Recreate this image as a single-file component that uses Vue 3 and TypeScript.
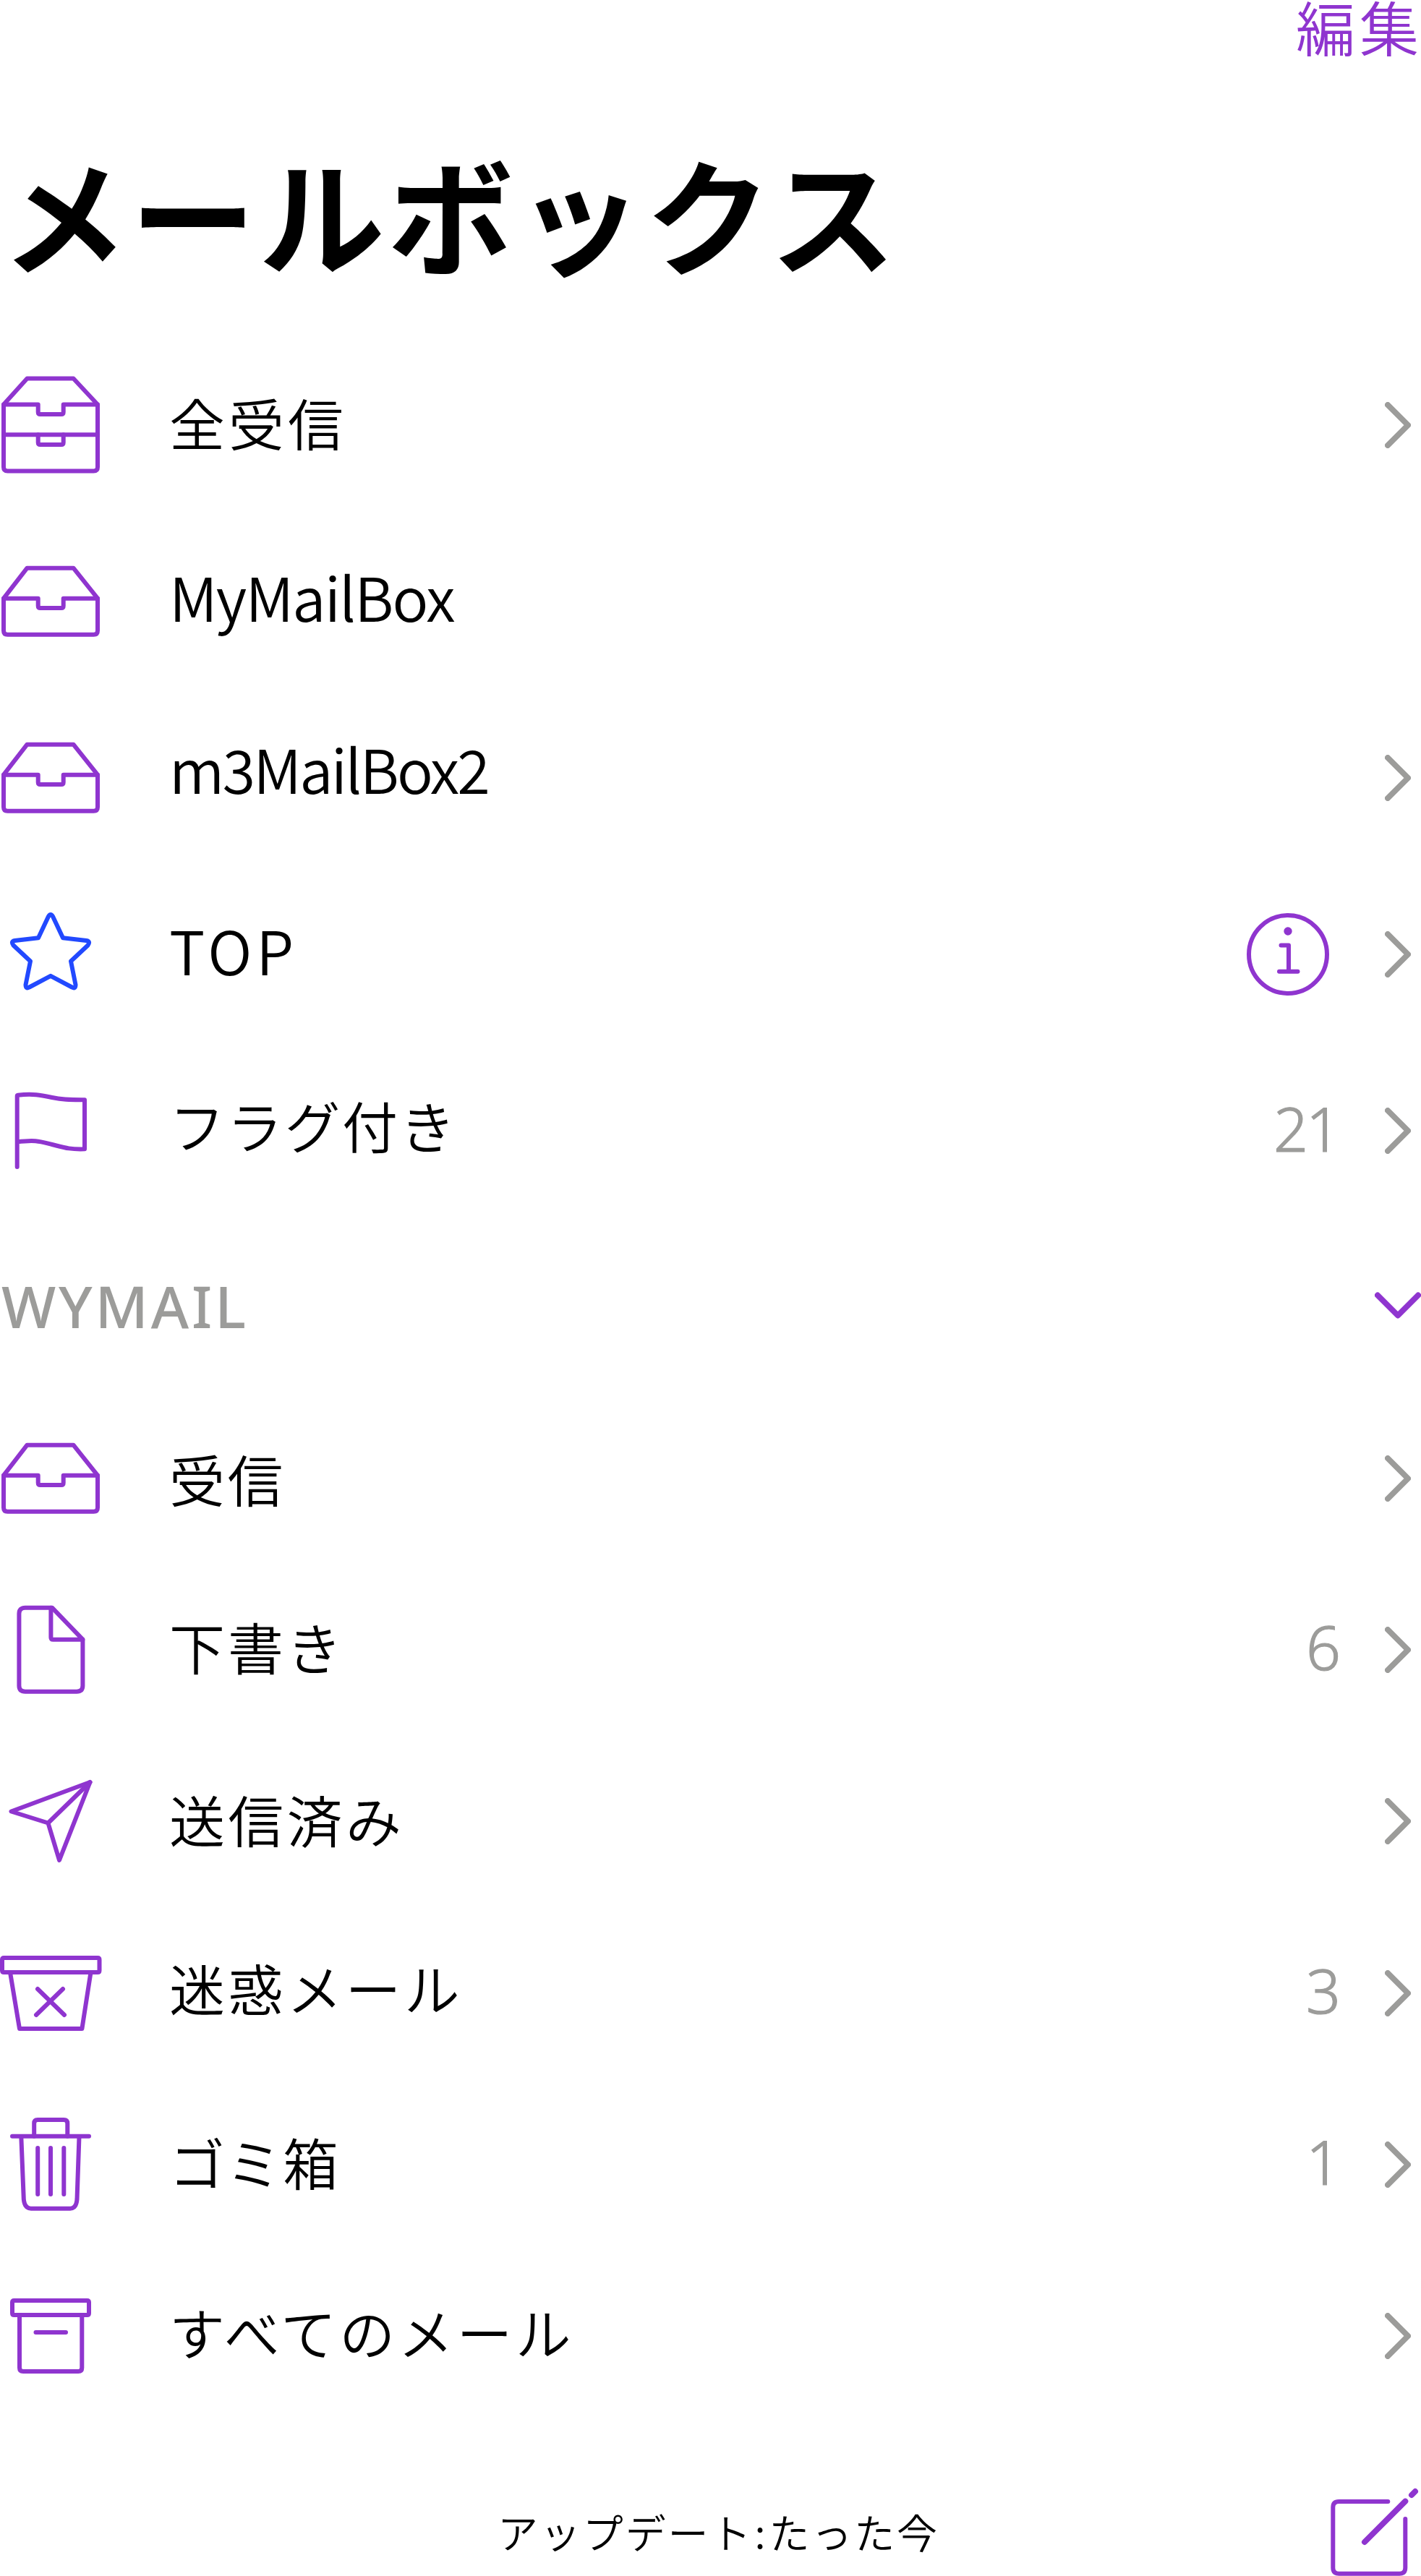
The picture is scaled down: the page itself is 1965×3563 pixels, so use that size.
<script setup lang="ts">
type IconName =
  | 'all' | 'tray' | 'star' | 'flag' | 'doc' | 'send' | 'junk' | 'trash' | 'archive'

interface Mailbox {
  label: string
  icon: IconName
  spacing: number
  shift: number
  latin?: boolean
  count?: number
  info?: boolean
  chevron?: boolean
}

const icons: Record<IconName, string[]> = {
  all: [
    'M37.5 5.5H101.5L135 41.5V128Q135 133.5 129.5 133.5H10.5Q5 133.5 5 128V41.5Z',
    'M5 41.5H52.7V52Q52.7 55 55.7 55H84.7Q87.7 55 87.7 52V41.5H135',
    'M5 83.3H135',
    'M52.7 83.3V94Q52.7 97 55.7 97H84.7Q87.7 97 87.7 94V83.3',
  ],
  tray: [
    'M37.5 23.7H101.5L135 65.7V110.2Q135 115.7 129.5 115.7H10.5Q5 115.7 5 110.2V65.7Z',
    'M5 65.7H52.7V76Q52.7 79 55.7 79H84.7Q87.7 79 87.7 76V65.7H135',
  ],
  star: [
    'M67 17.5Q70 12.5 73 17.5L87 47.2L119.5 51Q125.5 52 121.5 57.5L98 79.5L104.5 112Q104.5 118.5 99.5 115.5L70 99.8L40.5 115.5Q35.5 118.5 35.5 112L42 79.5L18.5 57.5Q14.5 52 20.5 51L53 47.2Z',
  ],
  flag: [
    'M23.7 120V22Q23.7 21 25 20.8C45 18 58 21 72 24S95 27.5 117 27.3V95.3C95 96 88 93 72 89S50 82 23.7 85.5',
  ],
  doc: [
    'M72 11.7H35Q26.4 11.7 26.4 20V119.5Q26.4 127.7 35 127.7H106Q114.4 127.7 114.4 119.5V55.7Z',
    'M70.4 11.7V52.7Q70.4 55.7 73.4 55.7H114.4',
  ],
  send: ['M124.5 16L15.5 56.5L66.5 72.5L82 124Z', 'M124.5 16L66.5 72.5'],
  junk: [
    'M5.5 21H135Q137.5 21 137.5 23.5V38.5Q137.5 41 135 41H5.5Q3 41 3 38.5V23.5Q3 21 5.5 21Z',
    'M14 41L27 119H113.4L125.5 41',
    'M52 64L89 100',
    'M87 64L50 100',
  ],
  trash: [
    'M17 30.7H123',
    'M47.2 30.7V13Q47.2 8 52 8H88.3Q93.3 8 93.3 13V30.7',
    'M29.3 31L32.8 118Q34 130.7 43 130.7H97Q105.5 130.7 106.5 118L109.5 31',
    'M52.2 47V111',
    'M70 47V111',
    'M88.3 47V111',
  ],
  archive: [
    'M19.5 21H120.5Q123 21 123 23.5V38.5Q123 41 120.5 41H19.5Q17 41 17 38.5V23.5Q17 21 19.5 21Z',
    'M27 41V114Q27 119 32 119H108.3Q113.3 119 113.3 114V41',
    'M49.5 65H91',
  ],
}

const mailboxes: Mailbox[] = [
  { label: '全受信', icon: 'all', spacing: 5, shift: -4.1, chevron: true },
  { label: 'MyMailBox', icon: 'tray', spacing: -1.9, shift: -8.2, latin: true },
  { label: 'm3MailBox2', icon: 'tray', spacing: -2.8, shift: -13.7, latin: true, chevron: true },
  { label: 'TOP', icon: 'star', spacing: 6, shift: -7.4, latin: true, info: true, chevron: true },
  { label: 'フラグ付き', icon: 'flag', spacing: 2.7, shift: -8.1, count: 21, chevron: true },
]

const accountBoxes: Mailbox[] = [
  { label: '受信', icon: 'tray', spacing: 3.5, shift: 0.4, chevron: true },
  { label: '下書き', icon: 'doc', spacing: 4, shift: -4.6, count: 6, chevron: true },
  { label: '送信済み', icon: 'send', spacing: 4.3, shift: -3.6, chevron: true },
  { label: '迷惑メール', icon: 'junk', spacing: 4.2, shift: -7.6, count: 3, chevron: true },
  { label: 'ゴミ箱', icon: 'trash', spacing: 1.5, shift: -4.1, count: 1, chevron: true },
  { label: 'すべてのメール', icon: 'archive', spacing: 4.2, shift: -6.1, chevron: true },
]

const groups = [
  { id: 'main', title: '', rows: mailboxes },
  { id: 'account', title: 'WYMAIL', rows: accountBoxes },
]
</script>

<template>
  <main class="screen">
    <header class="bar"><span class="edit">編集</span></header>
    <h1 class="title">メールボックス</h1>

    <section v-for="g in groups" :key="g.id" :class="['group', g.id]">
      <div v-if="g.title" class="section-head">
        <h2 class="section-title">{{ g.title }}</h2>
        <svg class="fold" width="64" height="38" viewBox="0 0 64 38">
          <path d="M4 4.5L32 32.5L60 4.5" />
        </svg>
      </div>
      <div v-for="row in g.rows" :key="row.label" class="row">
        <svg :class="['icon', row.icon]" width="142" height="140" viewBox="0 0 142 140">
          <path v-for="d in icons[row.icon]" :key="d" :d="d" />
        </svg>
        <span
          :class="['label', { latin: row.latin }]"
          :style="{ letterSpacing: row.spacing + 'px', marginTop: row.shift * 2 + 'px' }"
        >{{ row.label }}</span>
        <svg v-if="row.info" class="info" width="120" height="120" viewBox="0 0 120 120">
          <circle cx="60" cy="60" r="54" />
          <circle class="dot" cx="60" cy="28" r="5.7" />
          <path d="M50.5 47.6H61V83.7M48 83.7H73.5" />
        </svg>
        <span v-if="row.count" class="count">{{ row.count }}</span>
        <svg v-if="row.chevron" class="chevron" width="36" height="64" viewBox="0 0 36 64">
          <path d="M4 4L32 32L4 60" />
        </svg>
      </div>
    </section>

    <footer class="footer">
      <span class="status">アップデート<span class="colon">:</span>たった今</span>
      <svg class="compose" width="130" height="125" viewBox="0 0 130 125">
        <path d="M84.3 22H16.5Q8.3 22 8.3 30V113.7Q8.3 121.7 16.5 121.7H100.3Q108.3 121.7 108.3 113.7V46" />
        <path class="pen" d="M52 78L108.3 21.7M117 13L122 8" />
      </svg>
    </footer>
  </main>
</template>

<style>
body {
  margin: 0;
  background: #fff;
}
</style>

<style scoped>
.screen {
  width: 1965px;
  height: 3563px;
  overflow: hidden;
  display: flex;
  flex-direction: column;
  background: #fff;
  color: #000;
  font-family: "Noto Sans CJK JP", sans-serif;
  font-weight: 350;
}
svg {
  display: block;
  flex: none;
  fill: none;
  stroke: #8f35cf;
  stroke-width: 6;
  stroke-linecap: round;
  stroke-linejoin: round;
}
.bar {
  height: 71px;
  display: flex;
  justify-content: flex-end;
}
.edit {
  margin-right: -3px;
  color: #8f35cf;
  font-size: 82px;
  line-height: 71px;
  letter-spacing: 6px;
  white-space: nowrap;
}
.title {
  box-sizing: border-box;
  height: 395px;
  margin: 0;
  padding: 45px 0 0 2px;
  font-size: 174px;
  line-height: 352px;
  letter-spacing: 4px;
  font-weight: 700;
  white-space: nowrap;
}
.row {
  display: flex;
  align-items: center;
  height: 244px;
}
.account .row {
  height: 237.3px;
}
.icon.star {
  stroke: #2249ff;
}
.label {
  flex: 1;
  margin-left: 92px;
  font-size: 77px;
  line-height: 120px;
  white-space: nowrap;
}
.label.latin {
  font-size: 83px;
}
.info {
  margin-right: 74px;
}
.info .dot {
  fill: #8f35cf;
  stroke: none;
}
.count {
  margin: -7px 64px 0 0;
  font-family: "Noto Sans", sans-serif;
  font-weight: 300;
  font-size: 84px;
  line-height: 120px;
  letter-spacing: -3px;
  color: #9c9c9a;
  -webkit-text-stroke: 1.2px #9c9c9a;
}
.chevron {
  margin-right: 14px;
  stroke: #9c9c9a;
  stroke-width: 8;
}
.section-head {
  height: 240px;
  display: flex;
  align-items: center;
  justify-content: space-between;
}
.section-title {
  margin: 0 0 0 2px;
  font-family: "Noto Sans", sans-serif;
  font-weight: 500;
  font-size: 80px;
  line-height: 120px;
  letter-spacing: 3.8px;
  color: #9c9c9a;
}
.fold {
  stroke-width: 8;
}
.footer {
  flex: 1;
  display: flex;
  align-items: flex-end;
  justify-content: space-between;
}
.status {
  margin: 0 0 22px 688px;
  font-size: 56px;
  line-height: 80px;
  letter-spacing: 2.9px;
  white-space: nowrap;
}
.colon {
  margin: 0 2px;
}
.compose .pen {
  stroke-width: 8;
}
</style>
